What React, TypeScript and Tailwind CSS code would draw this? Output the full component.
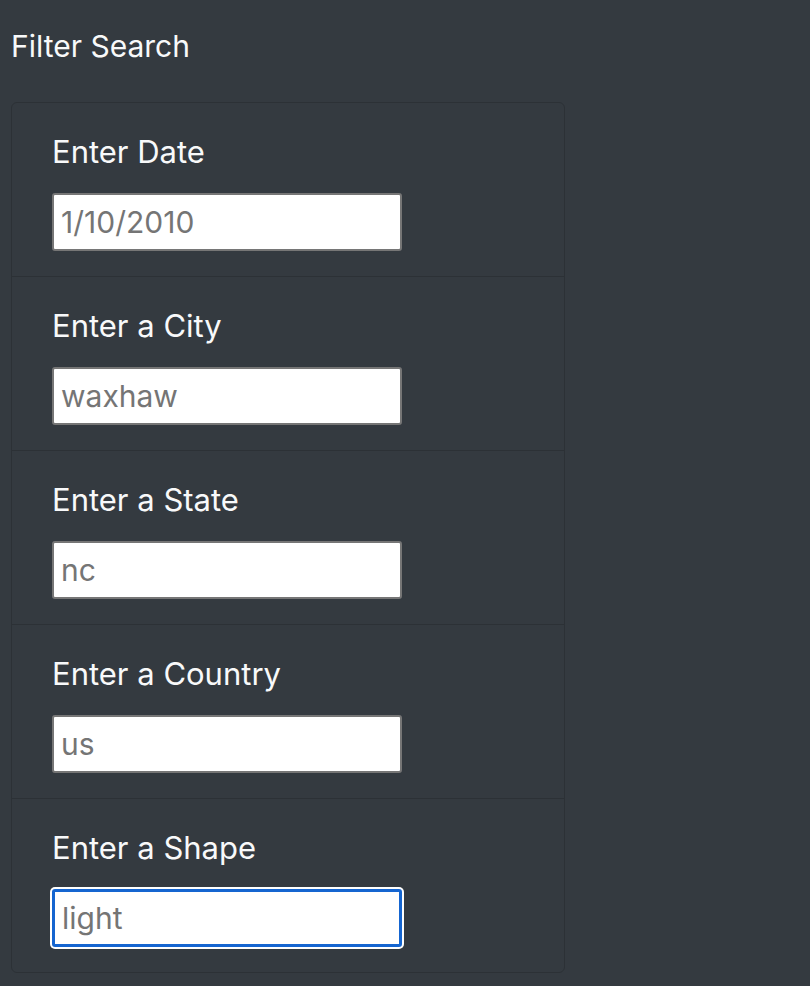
import React from "react";

const fields = [
  { label: "Enter Date", value: "1/10/2010" },
  { label: "Enter a City", value: "waxhaw" },
  { label: "Enter a State", value: "nc" },
  { label: "Enter a Country", value: "us" },
  { label: "Enter a Shape", value: "light", focused: true },
];

export default function App() {
  return (
    <div
      className="min-h-[986px] w-full bg-[#343a40] px-[11px] pt-[22px] text-[#f8f9fa]"
      style={{ fontFamily: "Inter, 'Noto Sans', sans-serif" }}
    >
      <h4 className="text-[30px] leading-[48px] font-normal">Filter Search</h4>

      <ul className="mt-[32px] w-[554px] rounded-[6px] border border-[#2c3136]">
        {fields.map((f, i) => (
          <li
            key={f.label}
            className={
              "flex flex-col px-[40px] pt-[29px] pb-[25px] " +
              (i > 0 ? "border-t border-[#2c3136]" : "")
            }
          >
            <label className="text-[31px] leading-[40px]">{f.label}</label>
            <input
              readOnly
              defaultValue={f.value}
              className={
                "mt-[21px] h-[58px] w-[350px] rounded-[3px] bg-white px-[7px] text-[30px] text-[#757575] outline-none " +
                (f.focused
                  ? "border-[3px] border-[#1565d0] ring-2 ring-white"
                  : "border-2 border-[#767676]")
              }
            />
          </li>
        ))}
      </ul>
    </div>
  );
}
